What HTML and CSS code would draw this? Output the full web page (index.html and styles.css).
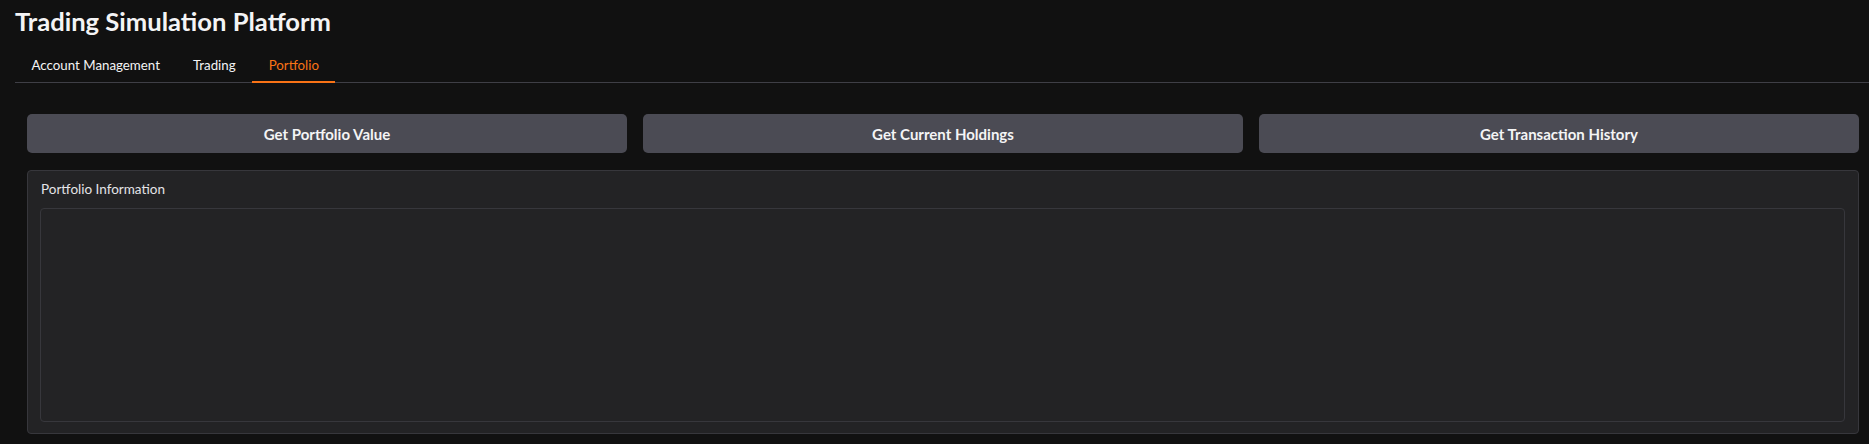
FILE: index.html
```html
<!DOCTYPE html>
<html>
<head>
<meta charset="utf-8">
<link rel="stylesheet" href="styles.css">
</head>
<body>
<div class="app">
  <h1 class="title">Trading Simulation Platform</h1>
  <nav class="tabs">
    <button class="tab">Account Management</button>
    <button class="tab">Trading</button>
    <button class="tab active">Portfolio</button>
  </nav>
  <div class="panel">
    <div class="actions">
      <button class="btn">Get Portfolio Value</button>
      <button class="btn">Get Current Holdings</button>
      <button class="btn">Get Transaction History</button>
    </div>
    <div class="block">
      <label class="label">Portfolio Information</label>
      <div class="output"></div>
    </div>
  </div>
</div>
</body>
</html>
```

FILE: styles.css
```css
html, body {
  margin: 0;
  padding: 0;
  background: #111111;
  height: 100%;
}
body {
  font-family: Lato, "Open Sans", sans-serif;
  color: #f4f4f5;
}
.app {
  padding-left: 15px;
}
.title {
  margin: 0;
  padding-top: 6px;
  height: 34px;
  font-size: 25.6px;
  line-height: 30px;
  font-weight: 700;
  color: #f4f4f5;
}
.tabs {
  display: flex;
  border-bottom: 1px solid #3f3f46;
  height: 44px;
  box-sizing: border-box;
  padding-top: 8px;
  margin-top: -1px;
}
.tab {
  background: none;
  border: none;
  font-family: inherit;
  font-size: 13.3px;
  color: #f4f4f5;
  padding: 0 16.5px;
  height: 35px;
  line-height: 24px;
  position: relative;
  cursor: pointer;
}
.tab.active {
  color: #f97316;
}
.tab.active::after {
  content: "";
  position: absolute;
  left: 0;
  right: 0;
  bottom: -1px;
  height: 2px;
  background: #f97316;
}
.panel {
  padding: 31px 10px 0 12px;
}
.actions {
  display: flex;
  gap: 16px;
}
.btn {
  flex: 1;
  height: 39px;
  border: none;
  border-radius: 5px;
  background: #4b4b54;
  color: #f4f4f5;
  font-family: inherit;
  font-weight: 700;
  font-size: 15px;
}
.block {
  margin-top: 17px;
  height: 264px;
  box-sizing: border-box;
  background: #232325;
  border: 1px solid #37373c;
  border-radius: 4px;
  padding: 9px 13px 11px 12px;
  display: flex;
  flex-direction: column;
}
.label {
  font-size: 13.5px;
  line-height: 18px;
  color: #e4e4e7;
  margin-bottom: 10px;
  margin-left: 1px;
}
.output {
  flex: 1;
  border: 1px solid #37373c;
  border-radius: 4px;
  background: #232325;
}
```
